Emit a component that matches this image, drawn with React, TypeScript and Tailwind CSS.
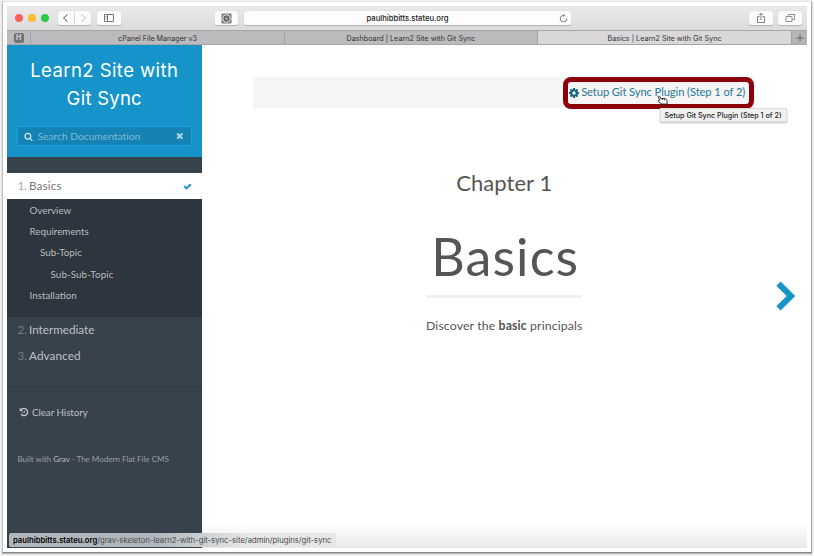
import React from 'react';

const GEAR =
  'M1024 896q0-106-75-181t-181-75-181 75-75 181 75 181 181 75 181-75 75-181zm512-109v222q0 12-8 23t-20 13l-185 28q-19 54-39 91 35 50 107 138 10 12 10 25t-9 23q-27 37-99 108t-94 71q-12 0-26-9l-138-108q-44 23-91 38-16 136-29 186-7 28-36 28h-222q-14 0-24.5-8.5t-11.5-21.5l-28-184q-49-16-90-37l-141 107q-10 9-25 9-14 0-25-11-126-114-165-168-7-10-7-23 0-12 8-23 15-21 51-66.5t54-70.5q-27-50-41-99l-183-27q-13-2-21-12.5t-8-23.5v-222q0-12 8-23t19-13l186-28q14-46 39-92-40-57-107-138-10-12-10-24 0-10 9-23 26-36 98.5-107.500t94.500-71.500q13 0 26 10l138 107q44-23 91-38 16-136 29-186 7-28 36-28h222q14 0 24.500 8.500t11.500 21.500l28 184q49 16 90 37l142-107q9-9 24-9 13 0 25 10 129 119 165 170 7 8 7 22 0 12-8 23-15 21-51 66.500t-54 70.500q26 50 41 98l183 28q13 2 21 12.500t8 23.500z';
const CHECK =
  'M1671 566q0 40-28 68l-724 724-136 136q-28 28-68 28t-68-28l-136-136-362-362q-28-28-28-68t28-68l136-136q28-28 68-28t68 28l294 295 656-657q28-28 68-28t68 28l136 136q28 28 28 68z';
const TIMES =
  'M1490 1322q0 40-28 68l-136 136q-28 28-68 28t-68-28l-294-294-294 294q-28 28-68 28t-68-28l-136-136q-28-28-28-68t28-68l294-294-294-294q-28-28-28-68t28-68l136-136q28-28 68-28t68 28l294 294 294-294q28-28 68-28t68 28l136 136q28 28 28 68t-28 68l-294 294 294 294q28 28 28 68z';
const SEARCH =
  'M1216 832q0-185-131.500-316.500t-316.500-131.500-316.500 131.500-131.500 316.500 131.500 316.500 316.500 131.500 316.500-131.500 131.500-316.500zm512 832q0 52-38 90t-90 38q-54 0-90-38l-343-342q-179 124-399 124-143 0-273.500-55.500t-225-150-150-225-55.500-273.500 55.500-273.500 150-225 225-150 273.500-55.500 273.500 55.500 225 150 150 225 55.500 273.500q0 220-124 399l343 343q37 37 37 90z';
const HISTORY =
  'M1664 896q0 156-61 298t-164 245-245 164-298 61q-172 0-327-72.500t-264-204.500q-7-10-6.500-22.500t8.500-20.500l137-138q10-9 25-9 16 2 23 12 73 95 179 147t225 52q104 0 198.500-40.500t163.500-109.500 109.500-163.500 40.500-198.500-40.500-198.500-109.500-163.500-163.500-109.500-198.500-40.500q-98 0-188 35.500t-160 101.500l137 138q31 30 14 69-17 40-59 40h-448q-26 0-45-19t-19-45v-448q0-42 40-59 39-17 69 14l130 129q107-101 244.500-156.500t284.500-55.500q156 0 298 61t245 164 164 245 61 298zm-640-288v448q0 14-9 23t-23 9h-320q-14 0-23-9t-9-23v-64q0-14 9-23t23-9h224v-352q0-14 9-23t23-9h64q14 0 23 9t9 23z';

function Glyph({ d, className, box = '0 0 1792 1792' }: { d: string; className: string; box?: string }) {
  return (
    <svg viewBox={box} className={`shrink-0 ${className}`} fill="currentColor">
      <path d={d} />
    </svg>
  );
}

function ToolButton({ className, children }: { className: string; children: React.ReactNode }) {
  return (
    <div className={`flex h-[14px] shrink-0 items-center justify-center rounded-[2.5px] bg-[#fbfbfb] text-[#666] shadow-[0_0.5px_1px_rgba(0,0,0,0.2)] ${className}`}>
      {children}
    </div>
  );
}

function Toolbar() {
  return (
    <div className="flex h-6 shrink-0 items-center bg-linear-to-b from-[#ebe9eb] to-[#dddbdd] pl-2">
      <div className="flex gap-[5px]">
        <span className="size-2 rounded-full bg-[#fc605b]" />
        <span className="size-2 rounded-full bg-[#fdbc34]" />
        <span className="size-2 rounded-full bg-[#2acb43]" />
      </div>
      <ToolButton className="ml-[9px] w-4 rounded-r-none">
        <svg viewBox="0 0 16 14" className="h-[14px] w-4" fill="none" stroke="#555" strokeWidth="1">
          <path d="M9.500 3.500 5.500 7l4 3.500" />
        </svg>
      </ToolButton>
      <ToolButton className="ml-px w-4 rounded-l-none">
        <svg viewBox="0 0 16 14" className="h-[14px] w-4" fill="none" stroke="#bbb" strokeWidth="1">
          <path d="m6.500 3.500 4 3.500-4 3.500" />
        </svg>
      </ToolButton>
      <ToolButton className="ml-1.5 w-6">
        <svg viewBox="0 0 24 14" className="h-[14px] w-6" fill="none" stroke="#777" strokeWidth="1">
          <path d="M7.500 3.500h9v7h-9zM10.500 3.500v7M8.500 5.500h1M8.500 7.500h1" />
        </svg>
      </ToolButton>
      <ToolButton className="ml-[94px] w-[23px]">
        <svg viewBox="0 0 12 12" className="size-[11px]">
          <rect x="0.500" y="0.500" width="11" height="11" rx="1.500" fill="#777" />
          <circle cx="6" cy="6" r="4.700" fill="#e8e8e8" />
          <circle cx="6" cy="6" r="3.500" fill="#666" />
          <circle cx="6" cy="6" r="1.700" fill="#999" />
        </svg>
      </ToolButton>
      <div className="ml-[6px] flex h-[14px] w-[327px] items-center rounded-[2.5px] bg-[#fdfdfd] shadow-[0_0.5px_1px_rgba(0,0,0,0.2)]">
        <span className="flex-1 pt-[1.5px] pl-[12px] text-center text-[7.7px] leading-none font-medium tracking-[-0.03px] text-[#222]">paulhibbitts.stateu.org</span>
        <svg viewBox="0 0 9 9" className="mr-[3px] size-[9px]" fill="none" stroke="#666" strokeWidth="0.8">
          <path d="M7.800 4.500A3.300 3.300 0 1 1 4.500 1.300h1M4.200 0l1.600 1.300-1.600 1.400" />
        </svg>
      </div>
      <ToolButton className="ml-auto w-6">
        <svg viewBox="0 0 12 12" className="size-3" fill="none" stroke="#666" strokeWidth="0.8">
          <path d="M4.500 4.500h-2v6h7v-6h-2M6 8V1.200M4.200 3 6 1.200 7.800 3" />
        </svg>
      </ToolButton>
      <ToolButton className="mr-[5px] ml-[5px] w-6">
        <svg viewBox="0 0 12 12" className="size-3" fill="none" stroke="#777" strokeWidth="0.8">
          <path d="M4.500 4V2.500h6v5H8.500M2 4.500h6v5H2z" />
        </svg>
      </ToolButton>
    </div>
  );
}

function BrowserTab({ label, className }: { label: string; className: string }) {
  return (
    <div className={`flex items-center justify-center border-l border-[#a3a1a3] pt-[2px] text-[7.2px] leading-none whitespace-nowrap ${className}`}>
      {label}
    </div>
  );
}

function TabBar() {
  return (
    <div className="flex h-[15px] shrink-0 border-t border-b border-[#a8a6a8] bg-[#bcbabc] text-[#333]">
      <div className="flex w-[23px] items-center justify-center">
        <span className="flex size-[10px] items-center justify-center rounded-[2px] bg-[#747374] text-[7px] leading-none font-bold text-[#d5d5d5]">H</span>
      </div>
      <BrowserTab label="cPanel File Manager v3" className="w-[254px] tracking-[-0.03px]" />
      <BrowserTab label="Dashboard | Learn2 Site with Git Sync" className="w-[253px]" />
      <BrowserTab label="Basics | Learn2 Site with Git Sync" className="w-[254px] bg-[#d9d7d9]" />
      <div className="flex flex-1 items-center justify-center border-l border-[#a3a1a3] bg-[#b5b3b5]">
        <svg viewBox="0 0 8 8" className="size-2" stroke="#666" strokeWidth="1">
          <path d="M0.500 4h7M4 0.500v7" />
        </svg>
      </div>
    </div>
  );
}

function SubItem({ label, className }: { label: string; className: string }) {
  return <li className={`flex h-[21.4px] items-center text-[9.8px] whitespace-nowrap text-[#bcbcbc] ${className}`}>{label}</li>;
}

function ChapterItem({ index, label, className }: { index: string; label: string; className: string }) {
  return (
    <div className="flex h-[26px] items-center pb-[1px] pl-[10.5px] text-[11.7px] whitespace-nowrap text-[#bfc1c3]">
      <span className="w-[11.5px] text-[#777d83]">{index}</span>
      <span className={className}>{label}</span>
    </div>
  );
}

function Sidebar() {
  return (
    <aside className="flex w-[194.5px] shrink-0 flex-col bg-[#38424d] font-[Lato,sans-serif]">
      <header className="h-[112px] bg-[#1694ca] px-[10px] pt-[11px]">
        <h1 className="text-center font-[Inter,sans-serif] text-[18.5px] leading-[28px] font-normal text-white">
          <span className="block tracking-[0.42px]">Learn2 Site with</span>
          <span className="block tracking-[0.25px]">Git Sync</span>
        </h1>
        <div className="mt-[14px] flex h-5 items-center rounded-[2px] border border-[#199fd9] bg-[#1482b2] pr-[6px] pl-[6px] text-[#b5d8e8]">
          <Glyph d={SEARCH} className="size-[9px] text-[#d4e8f1]" />
          <span className="ml-[4.5px] flex-1 text-[10.3px] leading-none tracking-[-0.03px] text-[#7fbbd7]">Search Documentation</span>
          <Glyph d={TIMES} className="size-[9.5px]" />
        </div>
      </header>
      <div className="mt-4 flex h-[26px] items-center bg-white pr-[10px] pl-[10.5px] text-[11.7px] text-[#777]">
        <span className="w-[11.5px] text-[#aaa]">1.</span>
        <span className="flex-1 tracking-[0.15px]">Basics</span>
        <Glyph d={CHECK} className="size-[9px] text-[#1694ca]" />
      </div>
      <ul className="h-[118px] bg-[#2d353e] pt-[0.3px]">
        <SubItem label="Overview" className="pl-[22.5px]" />
        <SubItem label="Requirements" className="pl-[22.5px]" />
        <SubItem label="Sub-Topic" className="pl-[33px]" />
        <SubItem label="Sub-Sub-Topic" className="pl-[43.5px] tracking-[0.1px]" />
        <SubItem label="Installation" className="pl-[22.5px]" />
      </ul>
      <ChapterItem index="2." label="Intermediate" className="" />
      <ChapterItem index="3." label="Advanced" className="tracking-[0.1px]" />
      <div className="mt-[17px] h-px bg-[#303943]" />
      <div className="mt-[17px] flex h-4 items-center pl-[12px] text-[9.7px] text-[#bfc1c3]">
        <Glyph d={HISTORY} className="size-[10px]" />
        <span className="ml-[3px]">Clear History</span>
      </div>
      <div className="mt-[31.5px] flex h-4 items-center pl-[10.5px] text-[8.1px] tracking-[-0.04px] whitespace-pre text-[#999fa4]">
        <span>Built with <span className="text-[#bbb]">Grav</span> - The Modern Flat File CMS</span>
      </div>
    </aside>
  );
}

function Content() {
  return (
    <main className="relative flex flex-1 flex-col items-center bg-white font-[Lato,sans-serif] text-[#555]">
      <div className="mt-8 flex h-[31px] w-[502px] items-center justify-end rounded-[2px] bg-[#f5f5f5] pr-[10px] text-[11.2px] text-[#2b7899]">
        <Glyph d={GEAR} box="0 128 1536 1536" className="mr-[2px] size-[10px] text-[#12638a]" />
        <span className="tracking-[-0.1px] whitespace-nowrap">Setup Git Sync Plugin (Step 1 of 2)</span>
      </div>
      <div className="absolute top-[32px] left-[361.5px] h-[32px] w-[191px] rounded-[8px] border-[5px] border-[#8b0009]" />
      <svg viewBox="0 0 12 12" className="absolute top-[49px] left-[455px] size-[11px]" fill="#fff" stroke="#222" strokeWidth="1" strokeLinejoin="round">
        <path d="M3 7 1.500 3.500C1 2 2.300 1.600 2.900 2.700L4 5l5 0c1.500.5 2 1.500 2 3v3H5.500L1.500 8.500C.8 7.500 1.800 6.600 3 7zM6 5v1.500M8 5.500v1.500" />
      </svg>
      <div className="absolute top-[63px] left-[458px] flex h-[14px] w-[127px] items-center justify-center border border-[#ddd] bg-[#f1f1f1] pt-px font-[Inter,sans-serif] text-[7.2px] leading-none font-medium whitespace-nowrap text-[#222] shadow-[0_1px_2px_rgba(0,0,0,0.25)]">
        Setup Git Sync Plugin (Step 1 of 2)
      </div>
      <p className="mt-[60px] text-[22px] leading-[30px] tracking-[0.05px]">Chapter 1</p>
      <h2 className="mt-[28px] ml-[2px] text-[52px] leading-[60px] font-normal tracking-[1.1px]">Basics</h2>
      <div className="mt-[9px] h-[3px] w-[156px] bg-[#f0f0f0]" />
      <p className="mt-[20px] text-[12.3px] leading-[16px] tracking-[0.12px] whitespace-nowrap">
        Discover the <b>basic</b> principals
      </p>
      <svg viewBox="0 0 20 30" className="absolute top-[236px] right-[11px] h-[30px] w-5" fill="none" stroke="#1694ca" strokeWidth="6">
        <path d="M2.500 2.600 15 15 2.500 27.400" />
      </svg>
      <div className="mt-auto h-[25px] w-full bg-linear-to-b from-white to-[#e9e9e9]" />
    </main>
  );
}

export default function App() {
  return (
    <div className="h-[556px] w-[814px] overflow-hidden bg-[#f1f1f1] pt-px pl-[2px] font-[Inter,sans-serif]">
      <div className="h-[552px] w-[810px] border border-t-[#e5e5e5] border-r-[#aaa] border-b-[#888] border-l-[#bbb] bg-white pt-1 pl-1 shadow-[0_1px_1px_rgba(0,0,0,0.25)]">
        <div className="relative flex h-[542px] w-[800px] flex-col overflow-hidden">
          <Toolbar />
          <TabBar />
          <div className="flex min-h-0 flex-1">
            <Sidebar />
            <Content />
          </div>
          <div className="absolute bottom-[1px] left-[2px] flex h-[14px] w-[327px] items-center rounded-[2px] bg-linear-to-r from-[#b0b7bc] from-45% to-[#e6e6e6] to-72% pt-px pl-[4px] text-[7.7px] leading-none whitespace-nowrap text-[#4a4a4a]">
            <b className="font-semibold text-black">paulhibbitts.stateu.org</b>/grav-skeleton-learn2-with-git-sync-site/admin/plugins/git-sync
          </div>
        </div>
      </div>
    </div>
  );
}
